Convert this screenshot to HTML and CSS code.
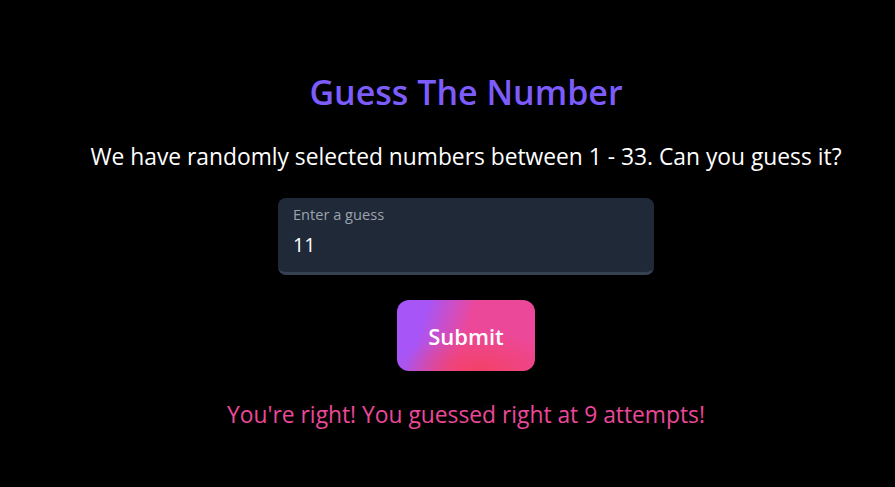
FILE: index.html
```html
<!DOCTYPE html>
<html lang="en">
<head>
<meta charset="utf-8">
<title>Guess The Number</title>
<link rel="stylesheet" href="styles.css">
</head>
<body>
<main class="app">
  <h1 class="title">Guess The Number</h1>
  <p class="subtitle">We have randomly selected numbers between 1 - 33. Can you guess it?</p>
  <div class="field">
    <label class="field-label" for="guess">Enter a guess</label>
    <input class="field-input" id="guess" type="text" value="11">
  </div>
  <button class="submit" type="button">Submit</button>
  <p class="result">You're right! You guessed right at 9 attempts!</p>
</main>
</body>
</html>
```
FILE: styles.css
```css
html, body {
  margin: 0;
  padding: 0;
  background: #000;
  height: 100%;
}
body {
  font-family: "Open Sans", "Noto Sans", sans-serif;
  color: #fff;
}
.app {
  display: flex;
  flex-direction: column;
  align-items: center;
  padding-top: 70px;
  padding-left: 37px;
}
.title {
  margin: 0;
  font-size: 34px;
  line-height: 44px;
  font-weight: 600;
  color: #7c5cfc;
}
.subtitle {
  margin: 28px 0 0;
  font-size: 22.8px;
  line-height: 30px;
}
.field {
  margin-top: 26px;
  width: 376px;
  height: 77px;
  box-sizing: border-box;
  background: #1f2937;
  border-radius: 8px;
  border-bottom: 3px solid #374151;
  padding: 7px 15px 0;
  display: flex;
  flex-direction: column;
}
.field-label {
  font-size: 14.6px;
  line-height: 18px;
  color: #9ca3af;
}
.field-input {
  margin-top: 10px;
  background: transparent;
  border: 0;
  outline: none;
  padding: 0;
  color: #fff;
  font-family: inherit;
  font-size: 19.5px;
  line-height: 24px;
}
.submit {
  margin-top: 25px;
  width: 138px;
  height: 71px;
  border: 0;
  border-radius: 12px;
  background:
    radial-gradient(ellipse 60% 55% at 60% 100%, rgba(244, 63, 94, 0.85), rgba(244, 63, 94, 0) 100%),
    linear-gradient(108deg, #a855f7 20%, #ec4899 50%, #ec4899 100%);
  color: #fff;
  font-family: inherit;
  font-size: 22px;
  font-weight: 600;
}
.result {
  margin: 29px 0 0;
  font-size: 22.8px;
  line-height: 30px;
  color: #ec4899;
}
```
